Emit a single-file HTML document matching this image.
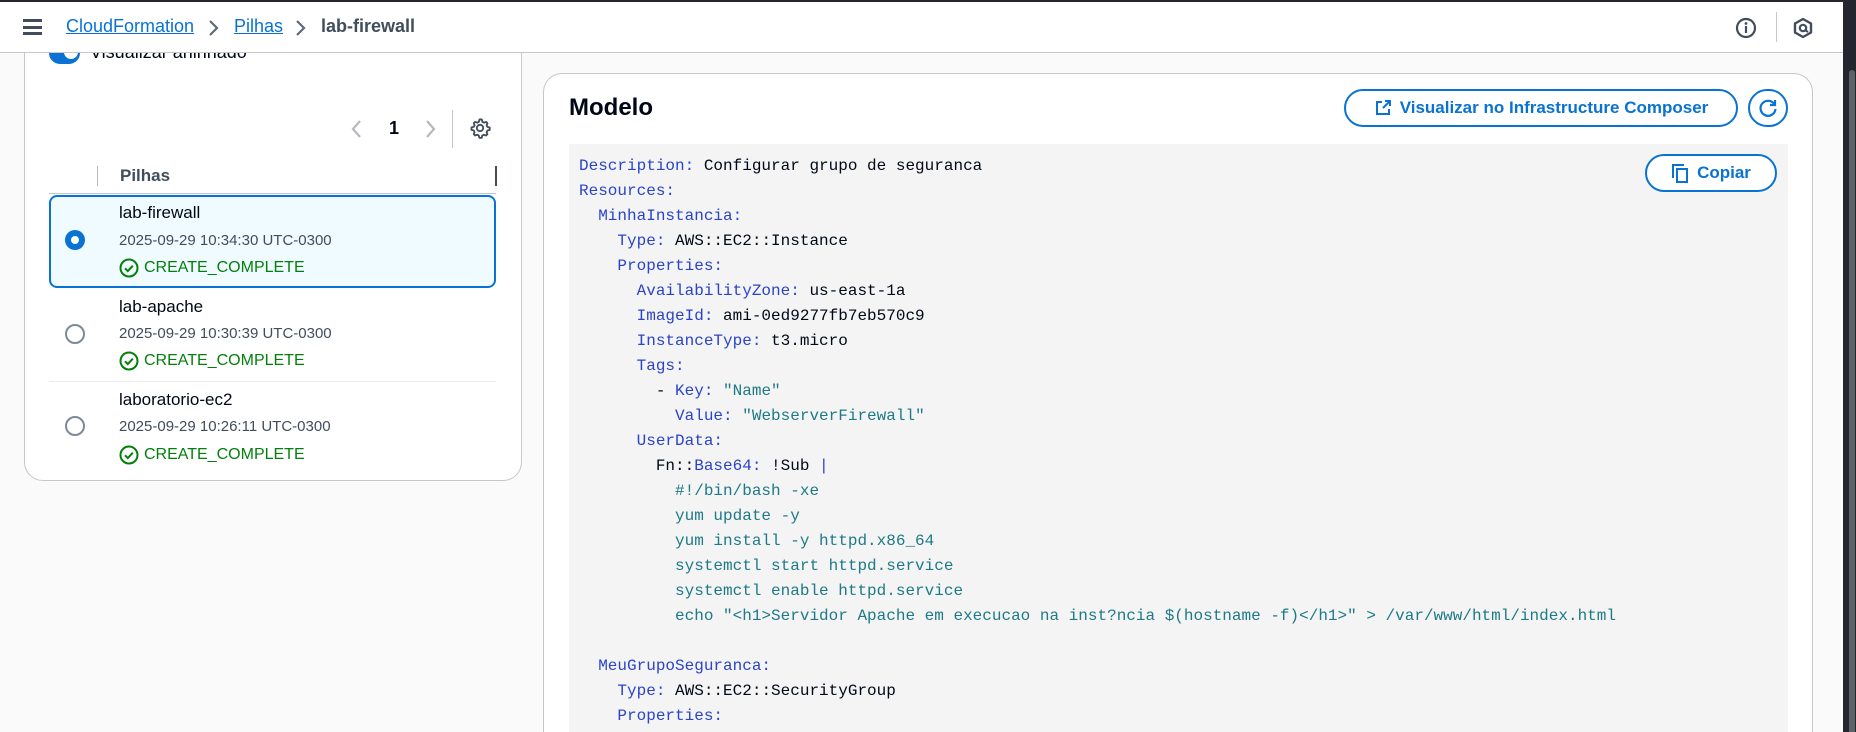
<!DOCTYPE html>
<html style="width:1856px;height:732px;overflow:hidden"><head><meta charset="utf-8"><style>
*{box-sizing:border-box;margin:0;padding:0}
body{width:1856px;height:732px;overflow:hidden;background:#fafafa;font-family:"Liberation Sans",sans-serif;position:relative;color:#000716}
.abs{position:absolute}
.hdr{left:0;top:0;width:1843px;height:53px;background:#fff;border-bottom:1px solid #c6c6cd;border-top:2px solid #23252f}
.bc{font-size:18px;top:16px}
.lnk{color:#0972d3;text-decoration:underline}
.panel{background:#fff;border:1px solid #c6c6cd;border-radius:19px}
.mono{font-family:"Liberation Mono",monospace;font-size:16px}
.k{color:#2a43c8}
.s{color:#1d7a86}
.code div{height:25px;line-height:25px;white-space:pre}
.name{font-size:17px}
.date{font-size:15px;color:#414d5c}
.st{font-size:16px;color:#037f0c;display:flex;align-items:center;gap:5px}
.radio{width:20px;height:20px;border-radius:50%;border:2px solid #7d8998;background:#fff}
.btn{border:2px solid #0972d3;border-radius:20px;color:#0972d3;font-weight:bold;font-size:17px;display:flex;align-items:center;justify-content:center;gap:8px;background:#fff}
</style></head><body>
<div class="abs" style="left:1843px;top:0;width:13px;height:732px;background:#23252f"></div>
<div class="abs" style="left:1849px;top:70px;width:6px;height:662px;background:#5f6169;border-radius:3px 3px 0 0"></div>

<div class="abs panel" style="left:24px;top:20px;width:498px;height:461px"></div>
<div class="abs" style="left:49px;top:42px;width:31px;height:22px;border-radius:11px;background:#0972d3"></div>
<div class="abs" style="left:64px;top:45px;width:14px;height:14px;border-radius:50%;background:#fff"></div>
<div class="abs" style="left:90px;top:42px;font-size:18px">Visualizar aninhado</div>

<div class="abs hdr"></div>
<div class="abs" style="left:23px;top:19px;width:19px;height:16px;border-top:3px solid #414d5c;border-bottom:3px solid #414d5c"></div>
<div class="abs" style="left:23px;top:25.5px;width:19px;height:3px;background:#414d5c"></div>
<div class="abs bc lnk" style="left:66px">CloudFormation</div>
<svg class="abs" style="left:206px;top:18px" width="14" height="20" viewBox="0 0 14 20"><path d="M4 3l7 7-7 7" fill="none" stroke="#5f6b7a" stroke-width="2.2"/></svg>
<div class="abs bc lnk" style="left:234px">Pilhas</div>
<svg class="abs" style="left:293px;top:18px" width="14" height="20" viewBox="0 0 14 20"><path d="M4 3l7 7-7 7" fill="none" stroke="#5f6b7a" stroke-width="2.2"/></svg>
<div class="abs bc" style="left:321px;font-weight:bold;color:#414d5c">lab-firewall</div>
<svg class="abs" style="left:1734px;top:16px" width="24" height="24" viewBox="0 0 24 24"><circle cx="12" cy="12" r="9" fill="none" stroke="#414d5c" stroke-width="2.2"/><circle cx="12" cy="7.5" r="1.4" fill="#414d5c"/><rect x="10.9" y="10" width="2.2" height="7" fill="#414d5c"/></svg>
<div class="abs" style="left:1776px;top:12px;width:1px;height:30px;background:#c6c6cd"></div>
<svg class="abs" style="left:1791px;top:16px" width="24" height="24" viewBox="0 0 24 24"><path d="M12 3 L20 7.5 V16.5 L12 21 L4 16.5 V7.5 Z" fill="none" stroke="#414d5c" stroke-width="2.4" stroke-linejoin="round"/><circle cx="12" cy="12" r="3.2" fill="none" stroke="#414d5c" stroke-width="2.2"/><path d="M14 14 L17 16" stroke="#414d5c" stroke-width="2.2"/></svg>

<svg class="abs" style="left:350px;top:118px" width="14" height="22" viewBox="0 0 14 22"><path d="M10 3l-7 8 7 8" fill="none" stroke="#b4b9c0" stroke-width="2.2"/></svg>
<div class="abs" style="left:389px;top:118px;font-size:18px;font-weight:bold">1</div>
<svg class="abs" style="left:423px;top:118px" width="14" height="22" viewBox="0 0 14 22"><path d="M4 3l7 8-7 8" fill="none" stroke="#b4b9c0" stroke-width="2.2"/></svg>
<div class="abs" style="left:452px;top:110px;width:1px;height:38px;background:#c6c6cd"></div>
<svg class="abs" style="left:469px;top:117px" width="22" height="22" viewBox="0 0 24 24"><path d="M12 2.5l2 .3.6 2.4 1.8 1 2.3-.9 1.4 1.5-.9 2.3 1 1.8 2.4.6v2.6l-2.4.6-1 1.8.9 2.3-1.5 1.4-2.3-.9-1.8 1-.6 2.4h-2.6l-.6-2.4-1.8-1-2.3.9-1.4-1.5.9-2.3-1-1.8-2.4-.6v-2.6l2.4-.6 1-1.8-.9-2.3 1.5-1.4 2.3.9 1.8-1 .6-2.4z" fill="none" stroke="#414d5c" stroke-width="2" stroke-linejoin="round"/><circle cx="12" cy="12" r="3.5" fill="none" stroke="#414d5c" stroke-width="2"/></svg>

<div class="abs" style="left:97px;top:166px;width:1px;height:20px;background:#b4b9c0"></div>
<div class="abs" style="left:495px;top:166px;width:2px;height:20px;background:#414d5c"></div>
<div class="abs" style="left:120px;top:166px;font-size:17px;font-weight:bold;color:#414d5c">Pilhas</div>
<div class="abs" style="left:49px;top:193px;width:447px;height:1px;background:#c6c6cd"></div>

<div class="abs" style="left:49px;top:195px;width:447px;height:93px;border:2px solid #0972d3;border-radius:8px;background:#f0fbff"></div>
<div class="abs" style="left:65px;top:230px;width:20px;height:20px;border-radius:50%;background:#0972d3"></div>
<div class="abs" style="left:71px;top:236px;width:8px;height:8px;border-radius:50%;background:#fff"></div>
<div class="abs name" style="left:119px;top:203px">lab-firewall</div>
<div class="abs date" style="left:119px;top:232px">2025-09-29 10:34:30 UTC-0300</div>
<div class="abs st" style="left:119px;top:258px"><svg width="20" height="20" viewBox="0 0 20 20"><circle cx="10" cy="10" r="8.5" fill="none" stroke="#037f0c" stroke-width="2"/><path d="M6 10.3l2.8 2.8 5-5.4" fill="none" stroke="#037f0c" stroke-width="2"/></svg>CREATE_COMPLETE</div>

<div class="radio abs" style="left:65px;top:324px"></div>
<div class="abs name" style="left:119px;top:297px">lab-apache</div>
<div class="abs date" style="left:119px;top:325px">2025-09-29 10:30:39 UTC-0300</div>
<div class="abs st" style="left:119px;top:351px"><svg width="20" height="20" viewBox="0 0 20 20"><circle cx="10" cy="10" r="8.5" fill="none" stroke="#037f0c" stroke-width="2"/><path d="M6 10.3l2.8 2.8 5-5.4" fill="none" stroke="#037f0c" stroke-width="2"/></svg>CREATE_COMPLETE</div>
<div class="abs" style="left:49px;top:381px;width:447px;height:1px;background:#e9ebed"></div>

<div class="radio abs" style="left:65px;top:416px"></div>
<div class="abs name" style="left:119px;top:390px">laboratorio-ec2</div>
<div class="abs date" style="left:119px;top:418px">2025-09-29 10:26:11 UTC-0300</div>
<div class="abs st" style="left:119px;top:445px"><svg width="20" height="20" viewBox="0 0 20 20"><circle cx="10" cy="10" r="8.5" fill="none" stroke="#037f0c" stroke-width="2"/><path d="M6 10.3l2.8 2.8 5-5.4" fill="none" stroke="#037f0c" stroke-width="2"/></svg>CREATE_COMPLETE</div>

<div class="abs panel" style="left:543px;top:73px;width:1270px;height:659px;border-bottom:none;border-radius:19px 19px 0 0"></div>
<div class="abs" style="left:569px;top:94px;font-size:24px;font-weight:bold">Modelo</div>
<div class="abs btn" style="left:1344px;top:89px;width:394px;height:38px"><svg width="18" height="18" viewBox="0 0 18 18"><path d="M8 3H3v12h12v-5M11 2h5v5M16 2l-7 7" fill="none" stroke="#0972d3" stroke-width="2"/></svg>Visualizar no Infrastructure Composer</div>
<div class="abs btn" style="left:1748px;top:89px;width:40px;height:38px;padding:0"><svg width="22" height="22" viewBox="0 0 22 22"><path d="M17.5 7.5A7.5 7.5 0 1 0 18.5 12" fill="none" stroke="#0972d3" stroke-width="2.2"/><path d="M18 3v5h-5" fill="none" stroke="#0972d3" stroke-width="2.2"/></svg></div>

<div class="abs" style="left:569px;top:144px;width:1219px;height:588px;background:#f4f4f4"></div>
<div class="abs btn" style="left:1645px;top:154px;width:132px;height:38px"><svg width="18" height="20" viewBox="0 0 18 20"><path d="M2 15V2h11" fill="none" stroke="#0972d3" stroke-width="2"/><rect x="6" y="6" width="10" height="13" fill="none" stroke="#0972d3" stroke-width="2"/></svg>Copiar</div>

<div class="abs mono code" style="left:579px;top:154px;height:578px;overflow:hidden;color:#000716">
<div><span class="k">Description:</span> Configurar grupo de seguranca</div>
<div><span class="k">Resources:</span></div>
<div>  <span class="k">MinhaInstancia:</span></div>
<div>    <span class="k">Type:</span> AWS::EC2::Instance</div>
<div>    <span class="k">Properties:</span></div>
<div>      <span class="k">AvailabilityZone:</span> us-east-1a</div>
<div>      <span class="k">ImageId:</span> ami-0ed9277fb7eb570c9</div>
<div>      <span class="k">InstanceType:</span> t3.micro</div>
<div>      <span class="k">Tags:</span></div>
<div>        - <span class="k">Key:</span> <span class="s">"Name"</span></div>
<div>          <span class="k">Value:</span> <span class="s">"WebserverFirewall"</span></div>
<div>      <span class="k">UserData:</span></div>
<div>        Fn::<span class="k">Base64:</span> !Sub <span class="k">|</span></div>
<div class="s">          #!/bin/bash -xe</div>
<div class="s">          yum update -y</div>
<div class="s">          yum install -y httpd.x86_64</div>
<div class="s">          systemctl start httpd.service</div>
<div class="s">          systemctl enable httpd.service</div>
<div class="s">          echo "&lt;h1&gt;Servidor Apache em execucao na inst?ncia $(hostname -f)&lt;/h1&gt;" &gt; /var/www/html/index.html</div>
<div> </div>
<div>  <span class="k">MeuGrupoSeguranca:</span></div>
<div>    <span class="k">Type:</span> AWS::EC2::SecurityGroup</div>
<div>    <span class="k">Properties:</span></div>
</div>
</body></html>
